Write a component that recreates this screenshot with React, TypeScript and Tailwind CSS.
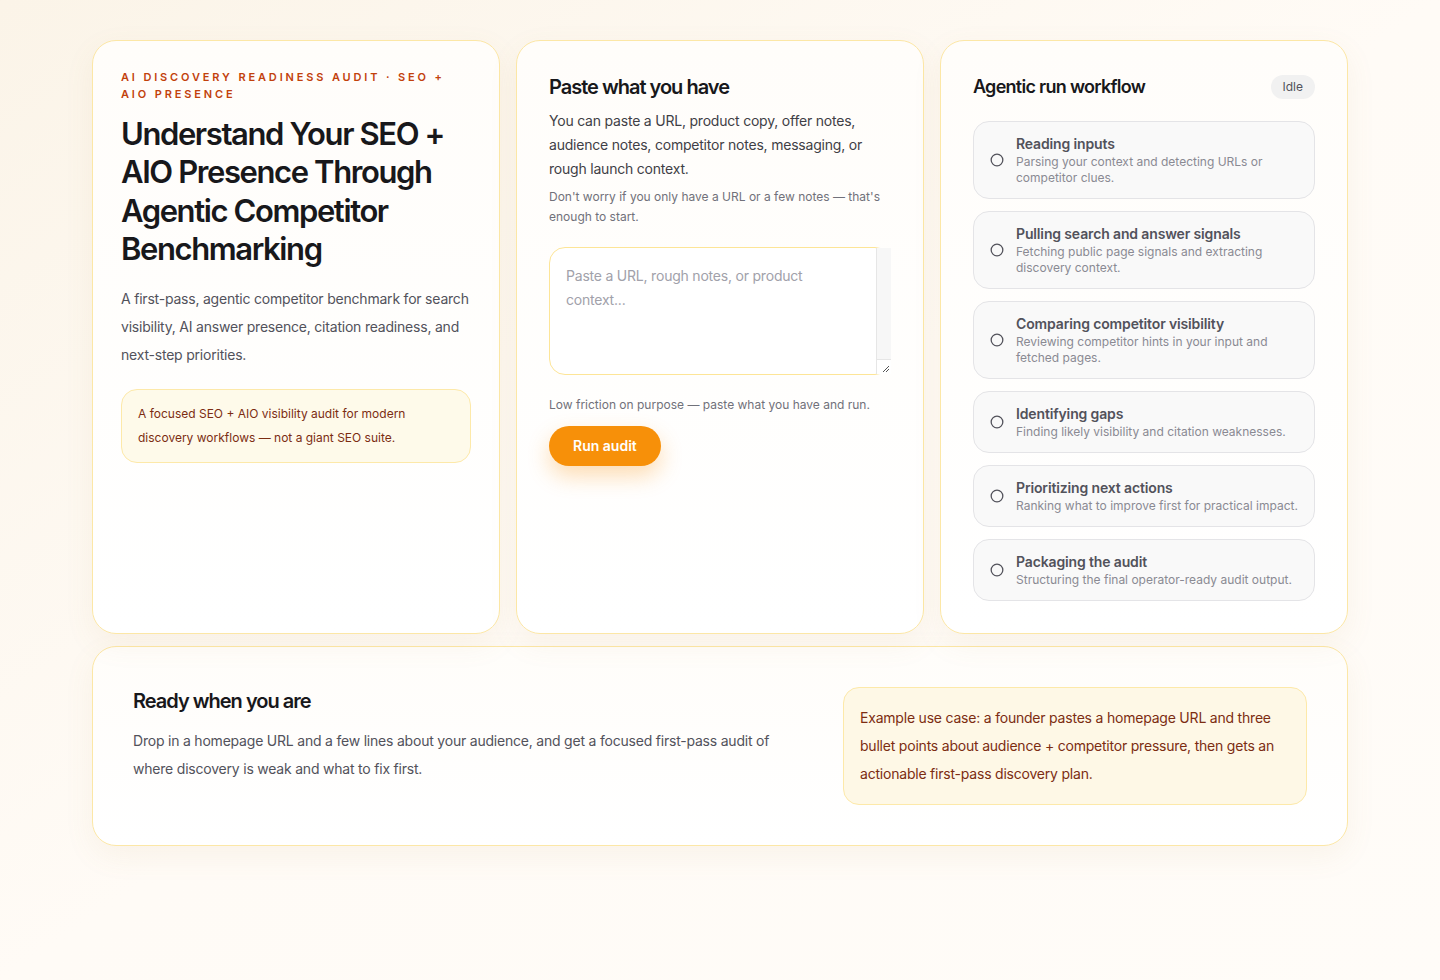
import { Circle } from "lucide-react";

const steps = [
  { title: "Reading inputs", desc: "Parsing your context and detecting URLs or competitor clues." },
  { title: "Pulling search and answer signals", desc: "Fetching public page signals and extracting discovery context." },
  { title: "Comparing competitor visibility", desc: "Reviewing competitor hints in your input and fetched pages." },
  { title: "Identifying gaps", desc: "Finding likely visibility and citation weaknesses." },
  { title: "Prioritizing next actions", desc: "Ranking what to improve first for practical impact." },
  { title: "Packaging the audit", desc: "Structuring the final operator-ready audit output." },
];

const card =
  "rounded-[24px] border border-[#fce7a6] bg-gradient-to-b from-[#fffdfa] to-white shadow-[0_10px_30px_rgba(180,140,80,0.08)]";

export default function App() {
  return (
    <div
      className="min-h-[980px] bg-gradient-to-br from-[#fbf4e8] via-[#fffbf6] to-[#fffcf8] text-[#1a1a1a]"
      style={{ fontFamily: "Inter, 'Noto Sans', sans-serif" }}
    >
      <div className="mx-auto w-[1256px] pt-10">
        <div className="grid grid-cols-3 gap-4">
          <section className={`${card} p-7`}>
            <p className="text-[11px] font-semibold uppercase leading-[17px] tracking-[0.26em] text-[#c2410c]">
              AI Discovery Readiness Audit · SEO + AIO Presence
            </p>
            <h1 className="mt-3 text-[31px] font-semibold leading-[38.4px] tracking-[-0.045em] text-[#18181b]">
              Understand Your SEO + AIO Presence Through Agentic Competitor Benchmarking
            </h1>
            <p className="mt-4 text-sm leading-7 tracking-[-0.015em] text-[#52525b]">
              A first-pass, agentic competitor benchmark for search visibility, AI answer presence, citation
              readiness, and next-step priorities.
            </p>
            <div className="mt-5 rounded-2xl border border-[#fde9a9] bg-[#fefaea] px-4 py-3 text-xs leading-6 text-[#7c2d12]">
              A focused SEO + AIO visibility audit for modern discovery workflows — not a giant SEO suite.
            </div>
          </section>

          <section className={`${card} p-8`}>
            <h2 className="text-xl font-semibold leading-7 tracking-[-0.05em] text-[#18181b]">Paste what you have</h2>
            <p className="mt-2 text-sm leading-6 tracking-[-0.015em] text-[#3f3f46]">
              You can paste a URL, product copy, offer notes, audience notes, competitor notes, messaging, or rough
              launch context.
            </p>
            <p className="mt-1.5 text-xs leading-5 text-[#71717a]">
              Don't worry if you only have a URL or a few notes — that's enough to start.
            </p>
            <div className="relative mt-5">
              <textarea
                placeholder="Paste a URL, rough notes, or product context..."
                className="block h-[128px] w-full resize-none rounded-2xl border border-[#fde597] bg-white py-4 pl-4 pr-[31px] text-sm leading-6 tracking-[-0.015em] text-[#27272a] outline-none placeholder:text-[#a1a1aa]"
              />
              {/* classic scrollbar track + resize corner */}
              <div className="absolute right-0 top-px bottom-px flex w-[15px] flex-col border-l border-[#e6e6e6] bg-[#f7f7f7]">
                <div className="flex-1" />
                <div className="flex h-[15px] items-end justify-end border-t border-[#e6e6e6] bg-white">
                  <svg width="10" height="10" viewBox="0 0 10 10" className="mb-px mr-px">
                    <path d="M9 3 L3 9 M9 6 L6 9" stroke="#555" strokeWidth="1" />
                  </svg>
                </div>
              </div>
            </div>
            <p className="mt-5 text-xs leading-5 text-[#71717a]">Low friction on purpose — paste what you have and run.</p>
            <button
              type="button"
              className="mt-[11px] h-10 rounded-full bg-[#f79009] px-6 text-sm font-semibold text-white shadow-[0_10px_22px_rgba(247,144,9,0.3)]"
            >
              Run audit
            </button>
          </section>

          <section className={`${card} p-8`}>
            <div className="flex items-center justify-between">
              <h2 className="text-lg font-semibold leading-7 tracking-[-0.04em] text-[#18181b]">Agentic run workflow</h2>
              <span className="rounded-full bg-[#f1f1f1] px-3 py-[3px] text-xs leading-[18px] text-[#52525b]">Idle</span>
            </div>
            <div className="mt-5 flex flex-col gap-3">
              {steps.map((s) => (
                <div
                  key={s.title}
                  className="flex items-center gap-3 rounded-2xl border border-[#e4e4e7] bg-[#f9f9f9] px-4 py-3"
                >
                  <Circle className="h-[14px] w-[14px] shrink-0 text-[#52525b]" strokeWidth={2.2} />
                  <div>
                    <p className="text-sm font-semibold leading-5 tracking-[-0.01em] text-[#52525b]">{s.title}</p>
                    <p className="text-xs leading-4 text-[#8a8a93]">{s.desc}</p>
                  </div>
                </div>
              ))}
            </div>
          </section>
        </div>

        <section className={`${card} mt-3 grid grid-cols-[1fr_464px] gap-10 p-10`}>
          <div>
            <h2 className="text-xl font-semibold leading-7 tracking-[-0.05em] text-[#18181b]">Ready when you are</h2>
            <p className="mt-3 text-sm leading-7 tracking-[-0.015em] text-[#52525b]">
              Drop in a homepage URL and a few lines about your audience, and get a focused first-pass audit of where
              discovery is weak and what to fix first.
            </p>
          </div>
          <div className="rounded-2xl border border-[#fde9a9] bg-[#fef8e6] p-4 text-sm leading-7 tracking-[-0.015em] text-[#7c2d12]">
            Example use case: a founder pastes a homepage URL and three bullet points about audience + competitor
            pressure, then gets an actionable first-pass discovery plan.
          </div>
        </section>
      </div>
    </div>
  );
}
